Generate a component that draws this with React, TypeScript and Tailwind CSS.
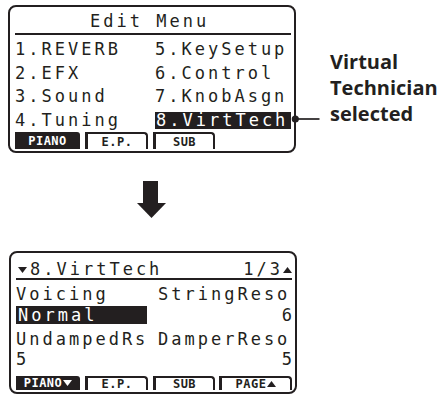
import React from "react";

const lcd = "font-['DejaVu_Sans_Mono',monospace] text-[17px] leading-[17px] tracking-[3px] whitespace-pre";

const Tab = ({ label, active, w, ml, arrow }: { label: string; active?: boolean; w: string; ml?: string; arrow?: "up" | "down" }) => (
  <div
    className={`${w} ${ml ?? ""} h-full flex items-center justify-center font-['DejaVu_Sans_Mono',monospace] font-bold text-[12px] leading-none tracking-[0.5px] ${
      active
        ? "bg-[#231f20] text-white rounded-tr-[3px]"
        : "border-l-[3px] border-t-2 border-r-2 border-[#231f20] rounded-tr-[4px] text-[#231f20]"
    }`}
  >
    <span>{label}</span>
    {arrow === "down" && (
      <svg width="9" height="6" viewBox="0 0 9 6" className="ml-[1px]">
        <polygon points="0,0 9,0 4.5,6" fill="currentColor" />
      </svg>
    )}
    {arrow === "up" && (
      <svg width="9" height="6" viewBox="0 0 9 6" className="ml-[1px]">
        <polygon points="0,6 9,6 4.5,0" fill="currentColor" />
      </svg>
    )}
  </div>
);

const EditMenu = () => {
  const items = ["1.REVERB", "5.KeySetup", "2.EFX", "6.Control", "3.Sound", "7.KnobAsgn", "4.Tuning"];
  return (
    <div className={`relative w-[288px] h-[148px] shrink-0 border-2 border-[#231f20] rounded-[8px] pl-[5px] pr-[3px] ${lcd}`}>
      <div className="mt-[6px] h-[17px] pl-[75px]">Edit Menu</div>
      <div className="mt-[3px] h-[2px] bg-[#231f20]" />
      <div className="mt-[6px] grid grid-cols-[140px_1fr] gap-y-[6.5px]">
        {items.map((t) => (
          <div key={t} className="h-[17px]">{t}</div>
        ))}
        <div className="h-[17px] bg-[#231f20] text-white pl-[1px]">8.VirtTech</div>
      </div>
      <div className="mt-[3.5px] h-[17px] flex">
        <Tab label="PIANO" active w="w-[65px]" />
        <Tab label="E.P." w="w-[63px]" ml="ml-[5px]" />
        <Tab label="SUB" w="w-[62px]" ml="ml-[5px]" />
      </div>
      {/* marker on the selected row */}
      <svg className="absolute left-[281px] top-[107px]" width="30" height="10" viewBox="0 0 30 10">
        <circle cx="4.3" cy="5" r="3.6" fill="#231f20" />
        <line x1="4" y1="5" x2="28.5" y2="5" stroke="#231f20" strokeWidth="1.7" />
      </svg>
    </div>
  );
};

const VirtTech = () => (
  <div className={`ml-[9px] mt-[33px] w-[288px] h-[143px] border-2 border-[#231f20] rounded-[8px] pl-[5px] pr-[3px] ${lcd}`}>
    <div className="mt-[8px] h-[17px] flex items-center justify-between">
      <div className="flex items-center">
        <svg width="9" height="6" viewBox="0 0 9 6" className="ml-[2px]">
          <polygon points="0,0 9,0 4.5,6" fill="#231f20" />
        </svg>
        <span className="ml-[3px]">8.VirtTech</span>
      </div>
      <div className="flex items-center">
        <span>1/3</span>
        <svg width="9" height="6" viewBox="0 0 9 6">
          <polygon points="0,6 9,6 4.5,0" fill="#231f20" />
        </svg>
      </div>
    </div>
    <div className="h-[2px] bg-[#231f20]" />
    <div className="mt-[6px] h-[17px] grid grid-cols-[142px_1fr]">
      <div>Voicing</div>
      <div>StringReso</div>
    </div>
    <div className="mt-[3px] h-[18px] leading-[18px] grid grid-cols-[142px_1fr]">
      <div className="w-[131px] bg-[#231f20] text-white pl-[2px]">Normal</div>
      <div className="text-right -mr-[3px]">6</div>
    </div>
    <div className="mt-[7px] h-[17px] grid grid-cols-[142px_1fr]">
      <div>UndampedRs</div>
      <div>DamperReso</div>
    </div>
    <div className="mt-[3px] h-[17px] grid grid-cols-[142px_1fr]">
      <div>5</div>
      <div className="text-right -mr-[3px]">5</div>
    </div>
    <div className="mt-[8px] h-[14px] flex">
      <Tab label="PIANO" active arrow="down" w="w-[64px]" />
      <Tab label="E.P." w="w-[63px]" ml="ml-[5px]" />
      <Tab label="SUB" w="w-[62px]" ml="ml-[5px]" />
      <Tab label="PAGE" arrow="up" w="w-[73px]" ml="ml-[4px]" />
    </div>
  </div>
);

export default function App() {
  return (
    <div className="w-[438px] h-[398px] bg-white overflow-hidden text-[#231f20]">
      <div className="flex items-start pt-[5px] pl-[8px]">
        <EditMenu />
        <div className="ml-[34px] mt-[44px] font-['Open_Sans',sans-serif] font-bold text-[20px] leading-[26px]">
          Virtual
          <br />
          Technician
          <br />
          selected
        </div>
      </div>
      <svg className="block ml-[137px] mt-[28px]" width="29" height="37" viewBox="0 0 29 37">
        <rect x="6" y="0" width="15" height="22" fill="#231f20" />
        <polygon points="0,22 29,22 14.5,37" fill="#231f20" />
      </svg>
      <VirtTech />
    </div>
  );
}
